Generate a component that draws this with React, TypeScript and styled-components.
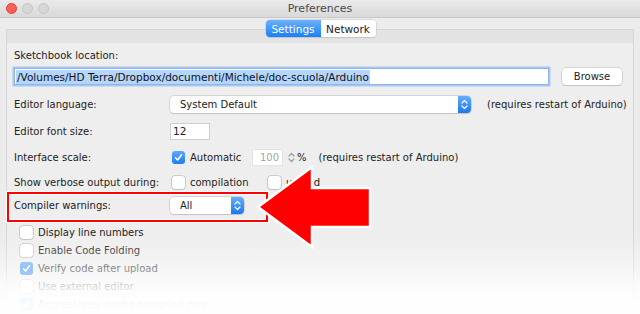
import type { FC, ReactNode } from 'react'
import styled, { createGlobalStyle } from 'styled-components'

const GlobalStyle = createGlobalStyle`
	html, body {
		margin: 0;
		padding: 0;
		background: #ececec;
		overflow: hidden;
	}
	* {
		box-sizing: border-box;
	}
`

const UpDown: FC<{ color?: string }> = ({ color = '#fff' }) => (
	<svg width="7" height="11" viewBox="0 0 7 11" fill="none">
		<path d="M1 4 L3.5 1.5 L6 4" stroke={color} strokeWidth="1.2" strokeLinecap="round" strokeLinejoin="round" />
		<path d="M1 7 L3.5 9.5 L6 7" stroke={color} strokeWidth="1.2" strokeLinecap="round" strokeLinejoin="round" />
	</svg>
)

const Check: FC<{ on?: boolean; children?: ReactNode }> = ({ on, children }) => (
	<CheckItem>
		<Box $on={on}>
			{on && (
				<svg width="9" height="9" viewBox="0 0 9 9">
					<path d="M1.5 4.8 L3.6 7 L7.5 1.8" stroke="#fff" strokeWidth="1.6" fill="none" strokeLinecap="round" strokeLinejoin="round" />
				</svg>
			)}
		</Box>
		{children}
	</CheckItem>
)

const Popup: FC<{ width: number; children: ReactNode }> = ({ width, children }) => (
	<Select style={{ width }}>
		<SelectText>{children}</SelectText>
		<Stepper>
			<UpDown />
		</Stepper>
	</Select>
)

const App: FC = () => {
	return (
		<>
			<GlobalStyle />
			<Window>
				<TitleBar>
					<Lights>
						<Light $color="#fc5f57" $border="#e0443e" />
						<Light $color="#d7d7d7" $border="#c6c6c6" />
						<Light $color="#d7d7d7" $border="#c6c6c6" />
					</Lights>
					<Title>Preferences</Title>
				</TitleBar>
				<Tabs>
					<Tab $active>Settings</Tab>
					<Tab>Network</Tab>
				</Tabs>
				<Pane>
					<Content>
						<Row $h={16} $mt={0}>
							<Label>Sketchbook location:</Label>
						</Row>
						<Row $h={17} $mt={5}>
							<PathInput>
								<Selected>/Volumes/HD Terra/Dropbox/documenti/Michele/doc-scuola/Arduino</Selected>
							</PathInput>
							<Button>Browse</Button>
						</Row>
						<Row $h={18} $mt={10}>
							<Label>Editor language:</Label>
							<Popup width={301}>System Default</Popup>
							<Hint $ml={16}>(requires restart of Arduino)</Hint>
						</Row>
						<Row $h={18} $mt={9}>
							<Label>Editor font size:</Label>
							<TextField>12</TextField>
						</Row>
						<Row $h={18} $mt={8}>
							<Label>Interface scale:</Label>
							<Slot $w={82}>
								<Check on>Automatic</Check>
							</Slot>
							<NumField>100</NumField>
							<SmallStepper>
								<UpDown color="#9a9a9a" />
							</SmallStepper>
							<Hint $ml={1}>%</Hint>
							<Hint $ml={12}>(requires restart of Arduino)</Hint>
						</Row>
						<Row $h={18} $mt={7}>
							<Label>Show verbose output during:</Label>
							<Slot $w={96}>
								<Check>compilation</Check>
							</Slot>
							<Check>upload</Check>
						</Row>
						<Row $h={18} $mt={5}>
							<Label>Compiler warnings:</Label>
							<Popup width={74}>All</Popup>
						</Row>
						<List>
							<Check>Display line numbers</Check>
							<Check>Enable Code Folding</Check>
							<Check on>Verify code after upload</Check>
							<Check>Use external editor</Check>
							<Check on>Aggressively cache compiled core</Check>
						</List>
					</Content>
				</Pane>
				<Fade />
				<Annotation viewBox="0 0 640 314">
					<rect x="8" y="193" width="259" height="28" fill="none" stroke="#fff" strokeWidth="4" />
					<rect x="8" y="193" width="259" height="28" fill="none" stroke="#ff0000" strokeWidth="2" />
					<polygon
						points="258,207 312,167 312,188 370,188 370,227 312,227 312,247"
						fill="#ff0000"
						stroke="#fff"
						strokeWidth="2.5"
						strokeLinejoin="miter"
					/>
				</Annotation>
			</Window>
		</>
	)
}

const Window = styled.div`
	position: relative;
	width: 640px;
	height: 314px;
	overflow: hidden;
	background: #ececec;
	font-family: 'DejaVu Sans', 'Liberation Sans', sans-serif;
	font-size: 10px;
	color: #222;
	display: flex;
	flex-direction: column;
`

const TitleBar = styled.div`
	position: relative;
	height: 18px;
	flex-shrink: 0;
	background: linear-gradient(#eaeaea, #d9d9d9);
	border-bottom: 1px solid #c9c9c9;
	display: flex;
	align-items: center;
	justify-content: center;
`

const Lights = styled.div`
	position: absolute;
	left: 6px;
	top: 3px;
	display: flex;
	gap: 5px;
`

const Light = styled.span<{ $color: string; $border: string }>`
	width: 11px;
	height: 11px;
	border-radius: 50%;
	background: ${(p) => p.$color};
	border: 0.5px solid ${(p) => p.$border};
`

const Title = styled.div`
	font-size: 11px;
	color: #4a4a4a;
`

const Tabs = styled.div`
	position: relative;
	z-index: 1;
	align-self: center;
	display: flex;
	margin-top: 2px;
	margin-bottom: -8px;
	margin-left: 1px;
	height: 17px;
	border-radius: 4px;
	background: #fff;
	box-shadow: 0 0 0 0.5px #c4c4c4, 0 1px 1px rgba(0, 0, 0, 0.12);
`

const Tab = styled.div<{ $active?: boolean }>`
	width: 55px;
	display: flex;
	align-items: center;
	justify-content: center;
	font-size: 10.5px;
	border-radius: ${(p) => (p.$active ? '4px 0 0 4px' : '0 4px 4px 0')};
	color: ${(p) => (p.$active ? '#fff' : '#1a1a1a')};
	background: ${(p) => (p.$active ? 'linear-gradient(#6cb1fb, #1a7ff6)' : '#fff')};
`

const Pane = styled.div`
	flex: 1;
	margin: 0 6px 0 6px;
	border: 1px solid #d6d6d6;
	border-bottom: none;
	background: #e3e3e3;
	padding-top: 13px;
	display: flex;
	flex-direction: column;
`

const Content = styled.div`
	flex: 1;
	background: #eeeeee;
	padding: 4px 0 0 7px;
	display: flex;
	flex-direction: column;
`

const Row = styled.div<{ $h: number; $mt: number }>`
	display: flex;
	align-items: center;
	flex-shrink: 0;
	height: ${(p) => p.$h}px;
	margin-top: ${(p) => p.$mt}px;
	white-space: nowrap;
`

const Label = styled.div`
	width: 156px;
	flex-shrink: 0;
`

const PathInput = styled.div`
	width: 535px;
	height: 17px;
	background: #fff;
	border: 1px solid #8fb6ea;
	box-shadow: 0 0 0 1.5px #a6c8f3;
	display: flex;
	align-items: center;
	padding-left: 1px;
	font-size: 10.5px;
`

const Selected = styled.span`
	background: #b4d6fd;
	padding: 1px 1px;
	color: #111;
`

const Button = styled.div`
	margin-left: 13px;
	width: 60px;
	height: 17px;
	background: #fff;
	border-radius: 4px;
	box-shadow: 0 0 0 0.5px #b9b9b9, 0 1px 1px rgba(0, 0, 0, 0.15);
	display: flex;
	align-items: center;
	justify-content: center;
`

const Select = styled.div`
	height: 17px;
	background: #fff;
	border-radius: 4px;
	box-shadow: 0 0 0 0.5px #bcbcbc, 0 1px 1px rgba(0, 0, 0, 0.15);
	display: flex;
	align-items: stretch;
`

const SelectText = styled.div`
	flex: 1;
	padding-left: 10px;
	display: flex;
	align-items: center;
`

const Stepper = styled.div`
	width: 13px;
	border-radius: 0 4px 4px 0;
	background: linear-gradient(#64aefa, #1c78f0);
	display: flex;
	align-items: center;
	justify-content: center;
`

const Hint = styled.span<{ $ml: number }>`
	margin-left: ${(p) => p.$ml}px;
`

const TextField = styled.div`
	width: 40px;
	height: 17px;
	background: #fff;
	border: 1px solid #cfcfcf;
	padding-left: 2px;
	display: flex;
	align-items: center;
	font-size: 10.5px;
`

const Slot = styled.div<{ $w: number }>`
	width: ${(p) => p.$w}px;
	flex-shrink: 0;
	display: flex;
	align-items: center;
`

const NumField = styled.div`
	width: 31px;
	height: 17px;
	background: #fff;
	border: 1px solid #e4e4e4;
	color: #a6a6a6;
	text-align: right;
	padding-right: 3px;
	display: flex;
	align-items: center;
	justify-content: flex-end;
`

const SmallStepper = styled.div`
	margin-left: 4px;
	width: 9px;
	display: flex;
	align-items: center;
	justify-content: center;
`

const CheckItem = styled.div`
	display: flex;
	align-items: center;
	flex-shrink: 0;
	height: 18px;
	gap: 5px;
`

const Box = styled.span<{ $on?: boolean }>`
	width: 13px;
	height: 13px;
	margin-left: 2px;
	flex-shrink: 0;
	border-radius: 3px;
	display: flex;
	align-items: center;
	justify-content: center;
	background: ${(p) => (p.$on ? 'linear-gradient(#5ea9fb, #1e7cf4)' : '#fff')};
	box-shadow: ${(p) => (p.$on ? 'none' : '0 0 0 0.5px #a9a9a9, 0 1px 1px rgba(0,0,0,0.08)')};
`

const List = styled.div`
	display: flex;
	flex-direction: column;
	flex-shrink: 0;
	margin-top: 9px;
	padding-left: 4px;
`

const Fade = styled.div`
	position: absolute;
	left: 0;
	right: 0;
	top: 236px;
	bottom: 0;
	background: linear-gradient(
		rgba(255, 255, 255, 0),
		rgba(255, 255, 255, 0.45) 41%,
		rgba(255, 255, 255, 0.82) 65%,
		rgba(255, 255, 255, 0.97) 88%
	);
	pointer-events: none;
`

const Annotation = styled.svg`
	position: absolute;
	left: 0;
	top: 0;
	width: 640px;
	height: 314px;
	pointer-events: none;
`

export default App
